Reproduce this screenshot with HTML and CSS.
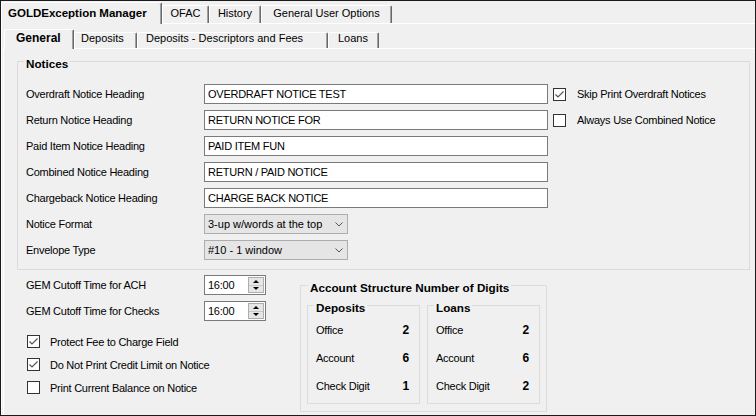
FILE: index.html
```html
<!DOCTYPE html>
<html>
<head>
<meta charset="utf-8">
<title>GOLDException Manager</title>
<link rel="stylesheet" href="styles.css">
</head>
<body>
<div class="window">
  <div class="tabs tabs-top">
    <div class="tab tab-sel t-gold">GOLDException Manager</div>
    <div class="tab t-ofac">OFAC</div>
    <div class="tab t-hist">History</div>
    <div class="tab t-guo">General User Options</div>
  </div>
  <div class="page page-top">
    <div class="tabs tabs-sub">
      <div class="tab tab-sel s-gen">General</div>
      <div class="tab s-dep">Deposits</div>
      <div class="tab s-ddf">Deposits - Descriptors and Fees</div>
      <div class="tab s-loans">Loans</div>
    </div>
    <div class="page page-sub">
      <fieldset class="group notices">
        <legend>Notices</legend>
        <div class="notice-grid">
          <div class="c1">Overdraft Notice Heading</div>
          <div class="c2 textbox">OVERDRAFT NOTICE TEST</div>
          <div class="c3 check"><span class="box"><svg width="11" height="11" viewBox="0 0 11 11"><path d="M1.5 5.5 L4 8 L9.5 2.5" fill="none" stroke="#555" stroke-width="1.2"/></svg></span><span>Skip Print Overdraft Notices</span></div>

          <div class="c1">Return Notice Heading</div>
          <div class="c2 textbox">RETURN NOTICE FOR</div>
          <div class="c3 check"><span class="box"></span><span>Always Use Combined Notice</span></div>

          <div class="c1">Paid Item Notice Heading</div>
          <div class="c2 textbox">PAID ITEM FUN</div>

          <div class="c1">Combined Notice Heading</div>
          <div class="c2 textbox">RETURN / PAID NOTICE</div>

          <div class="c1">Chargeback Notice Heading</div>
          <div class="c2 textbox">CHARGE BACK NOTICE</div>

          <div class="c1">Notice Format</div>
          <div class="c2 combo"><span>3-up w/words at the top</span><svg width="8" height="5" viewBox="0 0 8 5"><path d="M0.5 0.5 L4 4 L7.5 0.5" fill="none" stroke="#555" stroke-width="1"/></svg></div>

          <div class="c1">Envelope Type</div>
          <div class="c2 combo"><span>#10 - 1 window</span><svg width="8" height="5" viewBox="0 0 8 5"><path d="M0.5 0.5 L4 4 L7.5 0.5" fill="none" stroke="#555" stroke-width="1"/></svg></div>
        </div>
      </fieldset>

      <div class="lower">
        <div class="lower-left">
          <div class="spin-row">
            <span class="spin-label">GEM Cutoff Time for ACH</span>
            <div class="spinner"><span>16:00</span><span class="spin-btns"><span class="spin-up"></span><span class="spin-down"></span></span></div>
          </div>
          <div class="spin-row">
            <span class="spin-label">GEM Cutoff Time for Checks</span>
            <div class="spinner"><span>16:00</span><span class="spin-btns"><span class="spin-up"></span><span class="spin-down"></span></span></div>
          </div>
          <div class="check-list">
            <div class="check check-row"><span class="box"><svg width="11" height="11" viewBox="0 0 11 11"><path d="M1.5 5.5 L4 8 L9.5 2.5" fill="none" stroke="#555" stroke-width="1.2"/></svg></span><span>Protect Fee to Charge Field</span></div>
            <div class="check check-row"><span class="box"><svg width="11" height="11" viewBox="0 0 11 11"><path d="M1.5 5.5 L4 8 L9.5 2.5" fill="none" stroke="#555" stroke-width="1.2"/></svg></span><span>Do Not Print Credit Limit on Notice</span></div>
            <div class="check check-row"><span class="box"></span><span>Print Current Balance on Notice</span></div>
          </div>
        </div>

        <fieldset class="group acct">
          <legend>Account Structure Number of Digits</legend>
          <div class="acct-cols">
            <fieldset class="group sub">
              <legend>Deposits</legend>
              <div class="digit-row"><span>Office</span><b>2</b></div>
              <div class="digit-row"><span>Account</span><b>6</b></div>
              <div class="digit-row"><span>Check Digit</span><b>1</b></div>
            </fieldset>
            <fieldset class="group sub">
              <legend>Loans</legend>
              <div class="digit-row"><span>Office</span><b>2</b></div>
              <div class="digit-row"><span>Account</span><b>6</b></div>
              <div class="digit-row"><span>Check Digit</span><b>2</b></div>
            </fieldset>
          </div>
        </fieldset>
      </div>
    </div>
  </div>
</div>
</body>
</html>
```

FILE: styles.css
```css
* { box-sizing: border-box; }
html, body { margin: 0; padding: 0; }
body {
  font-family: "Liberation Sans", Arial, sans-serif;
  font-size: 11px;
  color: #000;
  background: #f0f0f0;
}
.window {
  width: 756px;
  height: 416px;
  border: 1px solid #1a1a1a;
  background: #f0f0f0;
  overflow: hidden;
}

/* tabs */
.tabs { display: flex; align-items: flex-end; }
.tabs-top { height: 22px; }
.tabs-sub { height: 24px; padding-left: 1px; }
.tab {
  white-space: nowrap;
  background: #f0f0f0;
  border-left: 1px solid #fff;
  border-top: 1px solid #fff;
  border-right: 1px solid #696969;
  box-shadow: inset -1px 0 #a0a0a0;
  border-radius: 2px 2px 0 0;
}
.tabs-top .tab { height: 18px; line-height: 12px; padding-top: 1px; }
.tabs-top .tab-sel { height: 22px; padding-top: 4px; }
.tabs-sub .tab { height: 16px; line-height: 11px; padding-top: 0; }
.tabs-sub .tab-sel { height: 20px; padding-top: 3px; }
.tab-sel {
  position: relative;
  z-index: 1;
  margin-bottom: -1px;
  font-weight: bold;
}
.t-gold { width: 161px; padding-left: 6px; font-size: 11.5px; }
.t-ofac { width: 47px; text-align: center; }
.t-hist { width: 52px; text-align: center; }
.t-guo { width: 131px; text-align: center; }
.s-gen { width: 70px; padding-left: 11px; font-size: 12px; }
.s-dep { width: 63px; padding-left: 6px; }
.s-ddf { width: 191px; padding-left: 8px; }
.s-loans { width: 51px; padding-left: 9px; }

.page { border-top: 1px solid #fff; border-left: 1px solid #fff; }
.page-top { height: 392px; padding-left: 1px; }
.page-sub { height: 367px; letter-spacing: -0.25px; }

/* group boxes */
.group {
  margin: 0;
  padding: 0;
  border: 1px solid #dcdcdc;
  min-inline-size: 0;
}
.group legend {
  font-weight: bold;
  font-size: 11.7px;
  letter-spacing: 0;
  padding: 4px 2px 0 2px;
  line-height: 13px;
}
.notices {
  margin: 4px 0 0 13px;
  width: 733px;
}
.notices legend { margin-left: 6px; }

.notice-grid {
  display: grid;
  grid-template-columns: 178px 344px 1fr;
  grid-auto-rows: 26px;
  align-items: center;
  padding: 11px 0 6px 8px;
}
.c1 { grid-column: 1; }
.c2 { grid-column: 2; }
.c3 { grid-column: 3; padding-left: 5px; }

.textbox {
  height: 20px;
  line-height: 18px;
  border: 1px solid #7a7a7a;
  background: #fff;
  padding-left: 3px;
  white-space: nowrap;
}
.combo {
  width: 144px;
  height: 20px;
  border: 1px solid #adadad;
  background: #e5e5e5;
  padding: 0 4px 0 3px;
  display: flex;
  align-items: center;
  justify-content: space-between;
  letter-spacing: 0;
  white-space: nowrap;
}

.check { display: flex; align-items: center; gap: 11px; white-space: nowrap; }
.box {
  width: 13px;
  height: 13px;
  border: 1px solid #333;
  background: #fff;
  display: flex;
}
.box svg { display: block; }

/* lower section */
.lower { display: flex; align-items: flex-start; margin: 2px 0 0 13px; }
.lower-left { width: 283px; padding-left: 9px; }
.spin-row { display: flex; align-items: center; height: 26px; }
.spin-label { width: 178px; }
.spinner {
  width: 62px;
  height: 20px;
  border: 1px solid #7a7a7a;
  background: #fff;
  display: flex;
  align-items: center;
  justify-content: space-between;
  padding-left: 3px;
  padding-right: 1px;
}
.spin-btns {
  width: 16px;
  height: 16px;
  border: 1px solid #adadad;
  background: #e6e6e6;
  display: flex;
  flex-direction: column;
}
.spin-up, .spin-down {
  flex: 1;
  display: flex;
  align-items: center;
  justify-content: center;
}
.spin-up { border-bottom: 1px solid #c8c8c8; }
.spin-up::before {
  content: "";
  border-left: 3px solid transparent;
  border-right: 3px solid transparent;
  border-bottom: 3px solid #000;
}
.spin-down::before {
  content: "";
  border-left: 3px solid transparent;
  border-right: 3px solid transparent;
  border-top: 3px solid #000;
}
.check-list { margin-top: 6px; padding-left: 1px; }
.check-row { height: 23px; gap: 10px; }

.acct {
  margin-top: 5px;
  width: 247px;
  padding: 0 6px 7px 6px;
}
.acct > legend { margin-left: 1px; }
.acct-cols { display: flex; gap: 7px; }
.sub {
  margin-top: 3px;
  width: 113px;
  padding: 2px 10px 3px 8px;
}
.sub legend { margin-left: -2px; }
.digit-row {
  height: 28px;
  display: flex;
  align-items: center;
  justify-content: space-between;
}
.digit-row b { font-size: 12px; }
```
